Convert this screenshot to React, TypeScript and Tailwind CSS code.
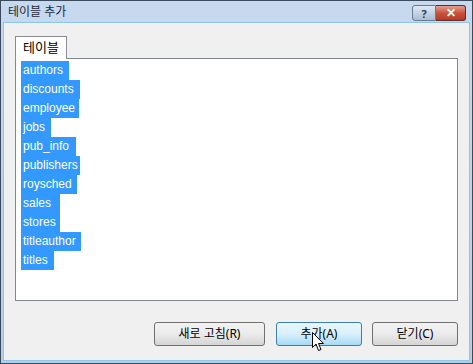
const FONT = "font-['Noto_Sans','Noto_Sans_CJK_KR',sans-serif]";

const tables = [
  { name: 'authors', w: 'min-w-[48px]' },
  { name: 'discounts', w: 'min-w-[59px]' },
  { name: 'employee', w: 'min-w-[58px]' },
  { name: 'jobs', w: 'min-w-[30px]' },
  { name: 'pub_info', w: 'min-w-[55px]' },
  { name: 'publishers', w: 'min-w-[57px]' },
  { name: 'roysched', w: 'min-w-[56px]' },
  { name: 'sales', w: 'min-w-[39px]' },
  { name: 'stores', w: 'min-w-[39px]' },
  { name: 'titleauthor', w: 'min-w-[60px]' },
  { name: 'titles', w: 'min-w-[33px]' },
];

function Cursor() {
  return (
    <svg width="13" height="20" viewBox="0 0 13 20" className="absolute left-[311px] top-[331px]">
      <path
        d="M0.5 0.5 L0.5 15.5 L4 12 L6.5 18.5 L9 17.5 L6.5 11.5 L11.5 11.5 Z"
        fill="#fff"
        stroke="#000"
        strokeWidth="1"
        strokeLinejoin="miter"
      />
    </svg>
  );
}

export default function App() {
  return (
    <div className={`relative w-[473px] h-[364px] ${FONT} text-[12px] bg-gradient-to-b from-[#c7d9ee] to-[#b6cde8] border border-[#3a4a5c] flex flex-col`}>
      {/* title bar */}
      <div className="h-[21px] flex items-center pl-[7px] pr-[6px]">
        <span className="text-[12px] text-[#1e2a3a] leading-none">테이블 추가</span>
        <div className="ml-auto flex items-start self-start mt-[4px]">
          <div className="w-[24px] h-[16px] rounded-l-[3px] border border-[#6b7b8f] bg-gradient-to-b from-[#dfe8f3] to-[#a9bdd5] flex items-center justify-center text-[11px] font-bold text-[#35404d] leading-none">
            ?
          </div>
          <div className="w-[30px] h-[16px] rounded-r-[3px] border border-l-0 border-[#6b2a24] bg-gradient-to-b from-[#e3a08f] via-[#c8523f] to-[#b23a28] flex items-center justify-center text-[12px] font-bold text-white leading-none">
            ✕
          </div>
        </div>
      </div>

      {/* client area */}
      <div className="flex-1 mx-[2px] mb-[2px] border border-[#8ec6e8] bg-[#f0f0f0] flex flex-col px-[11px] pt-[13px]">
        <div className="relative z-10 -mb-px w-[52px] h-[23px] bg-white border border-b-0 border-[#898c95] flex items-center justify-center text-black text-[13px]">
          테이블
        </div>
        <div className="h-[243px] bg-white border border-[#828790] pt-[2px] pl-[5px] flex flex-col items-start font-['Liberation_Sans',sans-serif]">
          {tables.map((t) => (
            <div key={t.name} className={`${t.w} h-[19px] leading-[19px] bg-[#3399ff] text-white pl-[2px] pr-[2px] whitespace-nowrap`}>
              {t.name}
            </div>
          ))}
        </div>

        <div className="mt-[21px] flex justify-end gap-[10px]">
          <button className="w-[111px] h-[24px] rounded-[3px] border border-[#707070] bg-gradient-to-b from-[#f2f2f2] via-[#ebebeb] to-[#d4d4d4] text-black text-[12px] mr-px">
            새로 고침(R)
          </button>
          <button className="w-[86px] h-[24px] rounded-[3px] border border-[#3c7fb1] bg-gradient-to-b from-[#eaf6fd] via-[#d9f0fc] to-[#a7d9f5] text-black text-[12px]">
            추가(A)
          </button>
          <button className="w-[86px] h-[24px] rounded-[3px] border border-[#707070] bg-gradient-to-b from-[#f2f2f2] via-[#ebebeb] to-[#d4d4d4] text-black text-[12px]">
            닫기(C)
          </button>
        </div>
      </div>

      <Cursor />
    </div>
  );
}
